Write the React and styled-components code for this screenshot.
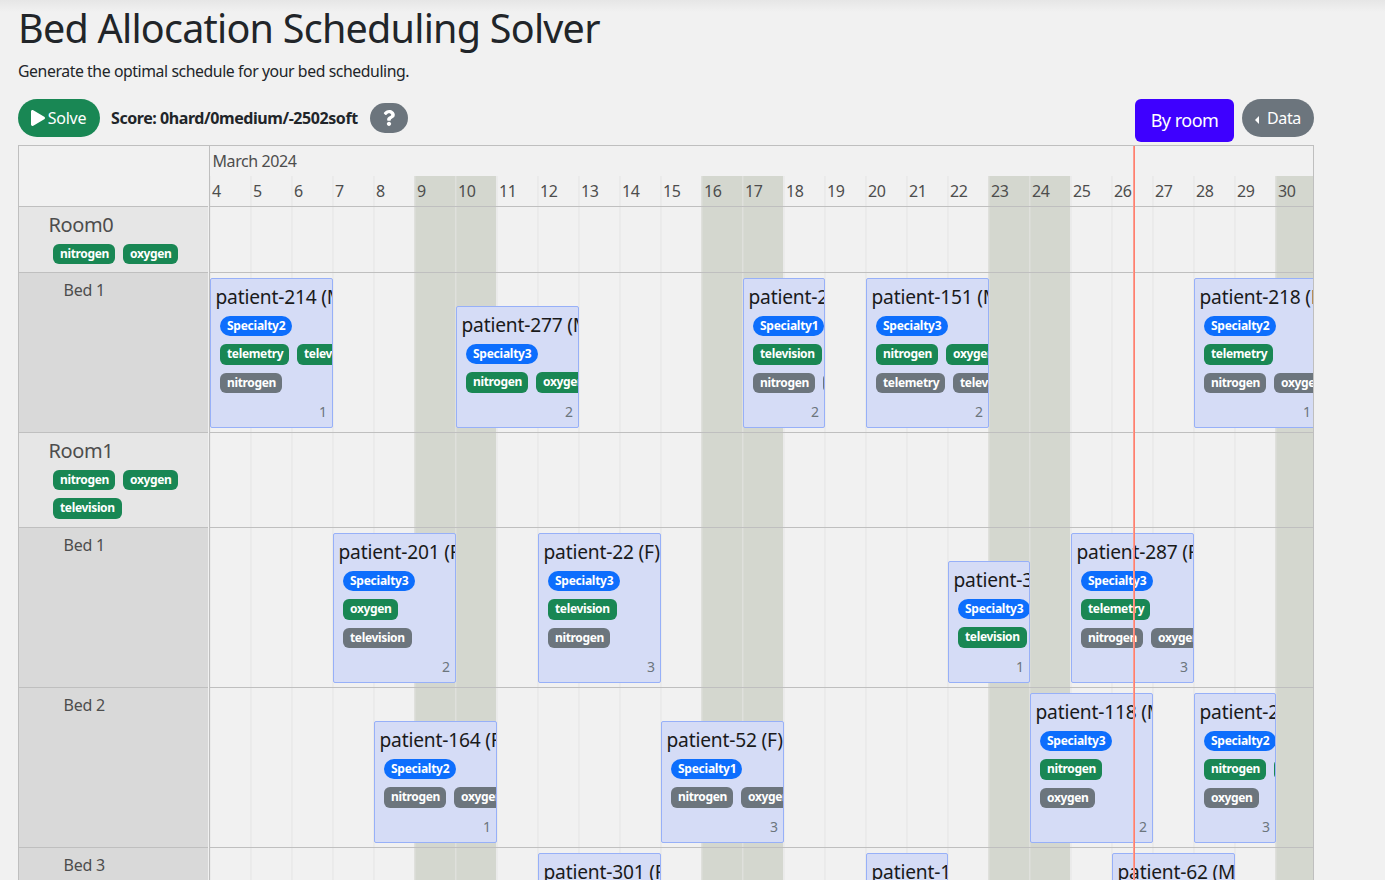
import React from 'react';
import styled, { createGlobalStyle, css } from 'styled-components';
import { FaPlay, FaQuestion } from 'react-icons/fa';

const Global = createGlobalStyle`
  *, *::before, *::after { box-sizing: border-box; }
  html, body { margin: 0; background: #f1f1f1; }
  body {
    height: 880px; overflow: hidden; color: #212529;
    font-family: "Noto Sans", "Open Sans", sans-serif;
    font-size: 16px; line-height: 24px;
  }
`;
const Page = styled.main`
  width: 1385px; height: 880px; overflow: hidden; padding: 0 71px 0 18px;
  background: linear-gradient(#e6e6e6, #f1f1f1 12px);
`;
const Title = styled.h1`
  margin: 0; padding-top: 4px; height: 59px; font-weight: 400; font-size: 39.5px; line-height: 48px;
  white-space: nowrap; letter-spacing: -0.76px;
`;
const Lead = styled.p`
  margin: 0; height: 40px; font-size: 15.8px; line-height: 24px; white-space: nowrap; letter-spacing: -0.42px;
`;
const Toolbar = styled.div`
  display: flex; align-items: flex-start; height: 46px;
`;
const Pill = styled.button`
  display: flex; align-items: center; justify-content: center; height: 38px; padding: 0; border: 0;
  border-radius: 19px; color: #fff; font: inherit; white-space: nowrap;
`;
const SolveButton = styled(Pill)`
  width: 82px; background: #198754; gap: 2px; padding-right: 2px; letter-spacing: -0.2px;
`;
const Score = styled.span`
  margin-left: 11px; width: 259px; line-height: 38px; font-weight: 700; white-space: nowrap; letter-spacing: -0.43px;
`;
const HelpButton = styled(Pill)`
  width: 38px; height: 30px; margin-top: 4px; border-radius: 15px; background: #6c757d;
`;
const ViewTab = styled(Pill)`
  width: 99px; height: 43px; margin-left: auto; border-radius: 6px; background: #3e00ff; font-size: 18px;
  letter-spacing: -0.5px; padding-bottom: 1px;
`;
const DataButton = styled(Pill)`
  width: 72px; margin-left: 8px; gap: 8px; background: #6c757d; letter-spacing: -0.4px;
`;
const Caret = styled.i`
  margin-top: 3px; border: solid transparent; border-width: 4px 4px 4px 0; border-right-color: #fff;
`;
const Panel = styled.section`
  position: relative; width: 1296px; height: 760px; border: 1px solid #bfbfbf; color: #4d4d4d; overflow: hidden;
`;
const Row = styled.div`
  display: flex; height: ${p => p.$h}px;
`;
const Label = styled.div`
  flex: none; width: 189px; margin-right: 1px; border-bottom: 1px solid #bfbfbf; letter-spacing: -0.25px;
  background: ${p => ({ room: '#e6e6e6', bed: '#d9d9d9' })[p.$kind] || 'transparent'};
  padding: ${p => (p.$kind === 'room' ? '6px 20px 0 30px' : '5px 0 0 44.5px')};
`;
const RoomName = styled.div`
  font-size: 20px; line-height: 24px; letter-spacing: -0.4px; margin-left: -0.5px;
`;
const Badges = styled.div`
  display: flex; flex-wrap: wrap; gap: 8px; padding: 7px 0 0 4px;
`;
const Badge = styled.span`
  flex: none; height: 20.4px; padding: 0 7px; border-radius: 6px; color: #fff; background: #198754;
  font-size: 12px; line-height: 20px; font-weight: 700; white-space: nowrap;
  width: ${p => p.$w}px;
  letter-spacing: -0.35px;
  ${p => p.$tone === 'blue' && css`background: #0d6efd; border-radius: 11px; letter-spacing: -0.25px;`}
  ${p => p.$tone === 'gray' && css`background: #6c757d;`}
`;
const Track = styled.div`
  flex: none; width: 1104px; overflow: hidden; display: grid; grid-template-columns: repeat(27, 41px);
  grid-template-rows: 100%;
  border-left: 1px solid #bfbfbf; border-bottom: 1px solid #bfbfbf;
`;
const Day = styled.div`
  grid-row: 1; grid-column: ${p => p.$col};
  background: ${p => (p.$weekend ? '#d4d7cf' : 'transparent')};
  border-left: 1px solid ${p => (p.$weekend ? '#d9dbd5' : '#ebebeb')};
  box-shadow: -1px 0 0 ${p => (p.$weekend ? '#dfe0dc' : '#eaeaea')};
  padding-left: 1px; line-height: 30px; letter-spacing: -0.4px;
`;
const AxisTrack = styled(Track)`
  grid-template-rows: 30px 30px;
  ${Day} { grid-row: 2; }
`;
const Month = styled.div`
  grid-row: 1; grid-column: 1 / -1; padding-left: 2.5px; line-height: 31px; letter-spacing: -0.4px;
`;
const Card = styled.article`
  grid-row: 1; grid-column: ${p => p.$col} / span ${p => p.$span}; z-index: 1;
  margin-top: ${p => (p.$short ? 33 : 5)}px; height: ${p => (p.$short ? 122 : 150)}px;
  border: 1px solid #97b0f8; border-radius: 2px; background: #d5dcf6; color: #1a1a1a;
  overflow: hidden; padding: 6px 5px 0;
`;
const Name = styled.div`
  font-size: 19.2px; line-height: 24px; white-space: nowrap; margin: 0 0 7px -0.5px; letter-spacing: -0.2px;
`;
const BadgeLine = styled.div`
  display: flex; gap: 8px; padding-left: 4px; height: 28.4px;
`;
const Count = styled.div`
  margin-top: -1px; text-align: right; color: #6c757d; font-size: 14px; line-height: 24px;
`;
const Now = styled.div`
  position: absolute; z-index: 3; top: 0; bottom: 0; left: 1114px; width: 2px;
  background: #ff7f6e; border-left: 1px solid #fb9e91;
`;

const W = { nitrogen: 62, oxygen: 55, television: 69, telemetry: 69, Specialty1: 71, Specialty2: 72, Specialty3: 72 };
const Tag = ({ name, tone }) => <Badge $tone={tone} $w={W[name]}>{name}</Badge>;

const rows = [
  { kind: 'room', name: 'Room0', h: 66, tags: ['nitrogen', 'oxygen'] },
  { kind: 'bed', name: 'Bed 1', h: 160, items: [
    [4, 3, 'patient-214 (M)', 'Specialty2', ['telemetry', 'television'], ['nitrogen'], 1],
    [10, 3, 'patient-277 (M)', 'Specialty3', ['nitrogen', 'oxygen'], null, 2],
    [17, 2, 'patient-216 (F)', 'Specialty1', ['television'], ['nitrogen', 'oxygen'], 2],
    [20, 3, 'patient-151 (M)', 'Specialty3', ['nitrogen', 'oxygen'], ['telemetry', 'television'], 2],
    [28, 3, 'patient-218 (F)', 'Specialty2', ['telemetry'], ['nitrogen', 'oxygen'], 1],
  ] },
  { kind: 'room', name: 'Room1', h: 95, tags: ['nitrogen', 'oxygen', 'television'] },
  { kind: 'bed', name: 'Bed 1', h: 160, items: [
    [7, 3, 'patient-201 (F)', 'Specialty3', ['oxygen'], ['television'], 2],
    [12, 3, 'patient-22 (F)', 'Specialty3', ['television'], ['nitrogen'], 3],
    [22, 2, 'patient-33 (F)', 'Specialty3', ['television'], null, 1],
    [25, 3, 'patient-287 (F)', 'Specialty3', ['telemetry'], ['nitrogen', 'oxygen'], 3],
  ] },
  { kind: 'bed', name: 'Bed 2', h: 160, items: [
    [8, 3, 'patient-164 (F)', 'Specialty2', null, ['nitrogen', 'oxygen'], 1],
    [15, 3, 'patient-52 (F)', 'Specialty1', null, ['nitrogen', 'oxygen'], 3],
    [24, 3, 'patient-118 (M)', 'Specialty3', ['nitrogen'], ['oxygen'], 2],
    [28, 2, 'patient-217 (F)', 'Specialty2', ['nitrogen', 'oxygen'], ['oxygen'], 3],
  ] },
  { kind: 'bed', name: 'Bed 3', h: 160, items: [
    [12, 3, 'patient-301 (F)', 'Specialty1', ['nitrogen'], ['oxygen'], 1],
    [20, 2, 'patient-19 (F)', 'Specialty1', ['nitrogen'], ['oxygen'], 1],
    [26, 3, 'patient-62 (M)', 'Specialty1', ['nitrogen'], ['oxygen'], 1],
  ] },
];
const days = Array.from({ length: 27 }, (_, i) => i + 4);
const Days = ({ labels }) => days.map((d, i) => (
  <Day key={d} $col={i + 1} $weekend={[0, 1].includes((d - 2) % 7)}>{labels ? d : null}</Day>
));

export default function App() {
  return (
    <Page>
      <Global />
      <Title>Bed Allocation Scheduling Solver</Title>
      <Lead>Generate the optimal schedule for your bed scheduling.</Lead>
      <Toolbar>
        <SolveButton><FaPlay size={16} />Solve</SolveButton>
        <Score>Score: 0hard/0medium/-2502soft</Score>
        <HelpButton><FaQuestion size={16} /></HelpButton>
        <ViewTab>By room</ViewTab>
        <DataButton><Caret />Data</DataButton>
      </Toolbar>
      <Panel>
        <Row $h={61}>
          <Label />
          <AxisTrack><Month>March 2024</Month><Days labels /></AxisTrack>
        </Row>
        {rows.map((r, i) => (
          <Row key={i} $h={r.h}>
            <Label $kind={r.kind}>
              {r.kind === 'room'
                ? <><RoomName>{r.name}</RoomName><Badges>{r.tags.map(t => <Tag key={t} name={t} />)}</Badges></>
                : r.name}
            </Label>
            <Track>
              <Days />
              {(r.items || []).map(([day, span, name, spec, green, gray, count]) => (
                <Card key={name} $col={day - 3} $span={span} $short={!green || !gray}>
                  <Name>{name}</Name>
                  <BadgeLine><Tag name={spec} tone="blue" /></BadgeLine>
                  {green && <BadgeLine>{green.map(t => <Tag key={t} name={t} />)}</BadgeLine>}
                  {gray && <BadgeLine>{gray.map(t => <Tag key={t} name={t} tone="gray" />)}</BadgeLine>}
                  <Count>{count}</Count>
                </Card>
              ))}
            </Track>
          </Row>
        ))}
        <Now />
      </Panel>
    </Page>
  );
}
